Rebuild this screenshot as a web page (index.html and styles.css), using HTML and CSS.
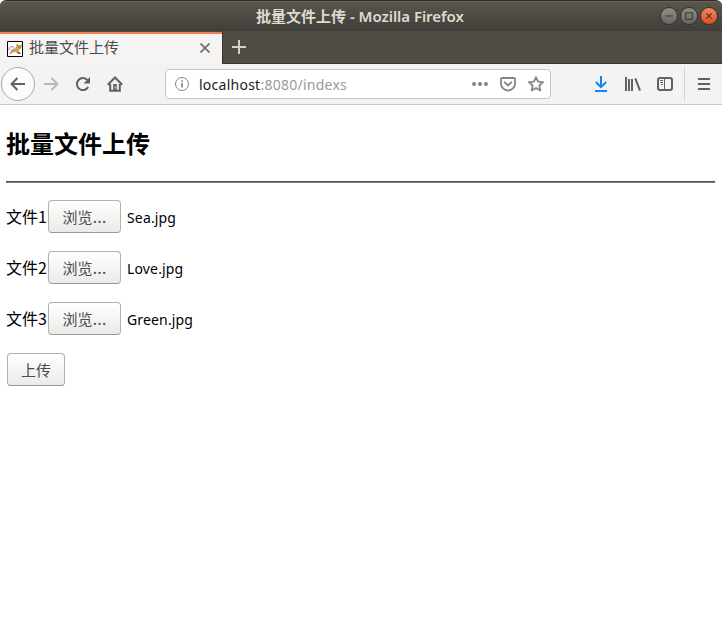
FILE: index.html
```html
<!DOCTYPE html>
<html lang="zh-CN">
<head>
<meta charset="utf-8">
<title>批量文件上传</title>
<link rel="stylesheet" href="styles.css">
</head>
<body>
<div class="window">
  <header class="titlebar">
    <div class="title">批量文件上传<span class="title-app"> - Mozilla Firefox</span></div>
    <div class="controls">
      <span class="control"><svg width="17" height="17" viewBox="0 0 17 17"><path d="M4.5 8.5h8"/></svg></span>
      <span class="control"><svg width="17" height="17" viewBox="0 0 17 17"><path d="M5 5h7v7H5z"/></svg></span>
      <span class="control close"><svg width="17" height="17" viewBox="0 0 17 17"><path d="M5.7 5.7l5.6 5.6M11.3 5.7l-5.6 5.6"/></svg></span>
    </div>
  </header>

  <div class="tabs">
    <div class="tab">
      <svg class="favicon" width="16" height="16" viewBox="0 0 16 16">
        <path d="M.5.5h15v15H.5z" fill="#fff" stroke="#000"/>
        <path d="M2.500 12.500l3-3.500 3.500-2 1-4 1.500 1.500H13L14.500 3.500 14 7l-2 1.500-.5 2 2.500 2h-3.500l-2-2-3 1-1.500 1z" fill="#cfa653" stroke="#94793c" stroke-width=".4"/>
        <path d="M2 9.500Q1.500 6 4 5.500T6.500 7M4 10l3-2" fill="none" stroke="#888" stroke-width=".9"/>
        <path d="M11 6h.8M13 6h.7M11 11.500l2 1" stroke="#3a3427" stroke-width=".9"/>
      </svg>
      <span class="tab-label">批量文件上传</span>
      <svg class="tab-close" width="12" height="12" viewBox="0 0 12 12"><path d="M1.500 1.500l9 9M10.500 1.500l-9 9"/></svg>
    </div>
    <div class="new-tab"><svg width="14" height="14" viewBox="0 0 14 14"><path d="M7 0v14M0 7h14"/></svg></div>
  </div>

  <nav class="toolbar">
    <span class="tool back"><svg width="16" height="16" viewBox="0 0 16 16"><path d="M15 8H1.500M7.500 2l-6 6 6 6"/></svg></span>
    <span class="tool forward"><svg width="16" height="16" viewBox="0 0 16 16"><path d="M1 8h13.500M8.500 2l6 6-6 6"/></svg></span>
    <span class="tool"><svg width="16" height="16" viewBox="0 0 16 16"><path d="M13.200 11A6 6 0 1 1 12.500 4.200"/><path class="solid" d="M15 1v6.500H8.500z"/></svg></span>
    <span class="tool"><svg width="16" height="16" viewBox="0 0 16 16"><path d="M.8 8.700L8 1.500l7.200 7.200M3.200 8v6.800h9.600V8"/><path class="solid" d="M6.200 8h3.600v7H6.200z"/><path class="knob" d="M8.200 10.500v2"/></svg></span>
    <div class="urlbar">
      <svg class="info" width="16" height="16" viewBox="0 0 16 16"><circle cx="8" cy="8" r="6.500"/><path d="M8 7v4.500M8 4.200v1.600" stroke-width="1.700"/></svg>
      <span class="url"><b>localhost</b>:8080/indexs</span>
      <span class="page-actions">
        <svg width="16" height="16" viewBox="0 0 16 16"><g class="dots"><circle cx="2" cy="8" r="2"/><circle cx="8" cy="8" r="2"/><circle cx="14" cy="8" r="2"/></g></svg>
        <svg width="16" height="16" viewBox="0 0 16 16"><path d="M2 2h12q1 0 1 1v4.500a7 7 0 0 1-14 0V3q0-1 1-1z"/><path d="M4.700 6.300L8 9.500l3.300-3.200" stroke-linecap="round"/></svg>
        <svg width="16" height="16" viewBox="0 0 16 16"><path d="M8 1.200l2 4.500 5 .5-3.700 3.400 1 4.900L8 12l-4.300 2.500 1-4.900L1 6.200l5-.5z" stroke-linejoin="round"/></svg>
      </span>
    </div>
    <span class="tool download"><svg width="16" height="16" viewBox="0 0 16 16"><path d="M8 0v11M2.800 6L8 11.200 13.200 6M2 15h12"/></svg></span>
    <span class="tool"><svg class="books" width="16" height="16" viewBox="0 0 16 16"><path d="M1 1v14M4 3v12M7 3v12M10.300 2.300L15 14.700"/></svg></span>
    <span class="tool"><svg width="16" height="16" viewBox="0 0 16 16"><rect x="1" y="2" width="14" height="12" rx="2"/><path class="thin" d="M7.500 2v12M3 4.500h3M3 6.500h3M4 8.500h2"/></svg></span>
    <span class="separator"></span>
    <span class="tool"><svg width="16" height="16" viewBox="0 0 16 16"><path d="M2 3h12M2 8h12M2 13h12"/></svg></span>
  </nav>

  <main class="page">
    <h2>批量文件上传</h2>
    <hr>
    <form>
      <div class="row"><label>文件1</label><button type="button">浏览<span class="dots-text">…</span></button><span class="name">Sea.jpg</span></div>
      <div class="row"><label>文件2</label><button type="button">浏览<span class="dots-text">…</span></button><span class="name">Love.jpg</span></div>
      <div class="row"><label>文件3</label><button type="button">浏览<span class="dots-text">…</span></button><span class="name">Green.jpg</span></div>
      <button type="button" class="submit">上传</button>
    </form>
  </main>
</div>
</body>
</html>
```
FILE: styles.css
```css
* { box-sizing: border-box; }
body {
  margin: 0;
  background: #fff;
  color: #000;
  font-family: "Noto Sans", "Noto Sans CJK SC", sans-serif;
  font-size: 15px;
}
svg { display: block; flex: none; }
.window { height: 635px; overflow: hidden; background: #fff; }

.titlebar {
  position: relative;
  height: 31px;
  border-top: 1px solid #32302c;
  border-radius: 6px 6px 0 0;
  background: linear-gradient(#5b574e, #403e39);
  box-shadow: inset 0 1px #68645a;
}
.title {
  padding-left: 256px;
  line-height: 30px;
  color: #dfdbd2;
  font-weight: 600;
  white-space: pre;
}
.title-app { font-size: 15px; letter-spacing: -.04px; }
.controls { position: absolute; top: 6px; right: 4px; display: flex; gap: 2px; }
.control {
  width: 18px;
  height: 18px;
  border: 1px solid #35332f;
  border-radius: 50%;
  background: linear-gradient(#908d86, #68665f);
}
.control svg { width: 16px; height: 16px; fill: none; stroke: #373530; stroke-width: 1.100; }
.control.close { background: linear-gradient(#f58560, #e24d1c); }

.tabs {
  display: flex;
  height: 33px;
  background: #504c45;
  border-bottom: 1px solid #37342f;
}
.tab {
  display: flex;
  align-items: center;
  width: 222px;
  height: 32px;
  margin-top: 1px;
  padding: 0 11px 2px 7px;
  border-top: 2px solid #f17c50;
  background: #f5f4f2;
}
.favicon { margin-top: 1px; }
.tab-label { flex: 1; margin: 0 0 2px 6px; line-height: 20px; color: #4c4c4c; }
.tab-close { fill: none; stroke: #666; stroke-width: 1.700; }
.new-tab { display: flex; align-items: center; padding-left: 9px; border-left: 1px solid #37342f; }
.new-tab svg { stroke: #d5d1c9; stroke-width: 2; }

.toolbar {
  display: flex;
  align-items: center;
  height: 41px;
  padding-left: 1px;
  background: #f4f3f2;
  border-bottom: 1px solid #c9c8c6;
}
.tool { display: flex; flex: none; align-items: center; justify-content: center; width: 32px; height: 34px; }
.tool svg { fill: none; stroke: #62615f; stroke-width: 2; }
.tool .solid { fill: #62615f; stroke: none; }
.tool .knob { stroke: #f3f2f1; stroke-width: 1; }
.tool .thin { stroke-width: 1; }
.back { width: 34px; border: 1px solid #aaa9a7; border-radius: 50%; background: #fcfcfc; }
.tool.forward svg { stroke: #bab9b7; }
.tool.download svg { stroke: #0a84ff; }
.separator { flex: none; width: 1px; height: 34px; margin: 0 3px; background: #d5d4d2; }
.urlbar {
  display: flex;
  flex: none;
  align-items: center;
  width: 386px;
  height: 30px;
  margin: 0 34px;
  padding: 0 6px 0 8px;
  border: 1px solid #c5c4c2;
  border-radius: 4px;
  background: #fff;
}
.info { fill: none; stroke: #858585; }
.url { margin-left: 9px; color: #999; font-size: 14px; letter-spacing: .25px; }
.url b { color: #222; font-weight: 400; }
.page-actions { display: flex; gap: 12px; margin-left: auto; }
.page-actions svg { fill: none; stroke: #858585; stroke-width: 1.800; }
.page-actions .dots { fill: #858585; stroke: none; }

.page { padding: 20px 7px 0 6px; }
h2 { margin: 0; font-size: 24px; line-height: 37px; }
hr { height: 2px; margin: 19px 0 17px; border: 0; background: linear-gradient(#505050 50%, #808080 50%); }
.row { display: flex; align-items: center; height: 33px; margin-bottom: 18px; }
label { width: 42px; padding-bottom: 2px; font-family: "Noto Sans CJK SC", sans-serif; font-size: 16px; white-space: nowrap; }
button {
  width: 73px;
  height: 33px;
  padding: 0;
  border: 1px solid #b3b1ae;
  border-bottom-color: #9b9996;
  border-radius: 4px;
  background: linear-gradient(#fff, #ebeae8);
  color: #4c4c4c;
  font: 15px "Noto Sans CJK SC", sans-serif;
}
.dots-text { font-family: "Open Sans", sans-serif; font-size: 18px; line-height: 1; }
.name { margin-left: 6px; padding-top: 1px; font-size: 14px; letter-spacing: .15px; }
.submit { display: block; width: 58px; margin-left: 1px; }
```
